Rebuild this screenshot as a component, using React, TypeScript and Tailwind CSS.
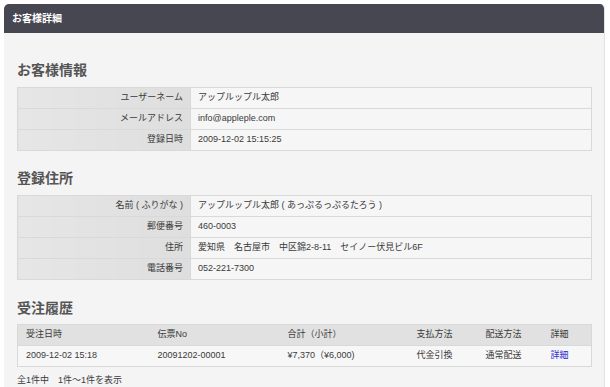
const font = {
  fontFamily: '"Liberation Sans", "Noto Sans CJK JP", sans-serif',
};

const customer = [
  { label: "ユーザーネーム", value: "アップルップル太郎" },
  { label: "メールアドレス", value: "info@appleple.com" },
  { label: "登録日時", value: "2009-12-02 15:15:25" },
];

const address = [
  { label: "名前 ( ふりがな )", value: "アップルップル太郎 ( あっぷるっぷるたろう )" },
  { label: "郵便番号", value: "460-0003" },
  { label: "住所", value: "愛知県　名古屋市　中区錦2-8-11　セイノー伏見ビル6F" },
  { label: "電話番号", value: "052-221-7300" },
];

const InfoTable = ({ rows }: { rows: { label: string; value: string }[] }) => (
  <table className="w-full border-collapse table-fixed text-[9px] text-[#3a3a3a]">
    <tbody>
      {rows.map((r) => (
        <tr key={r.label} className="h-[21px]">
          <th className="w-[173px] border border-[#d9d9d9] bg-gradient-to-r from-[#e6e6e6] to-[#dedede] pr-[7px] text-right font-normal">
            {r.label}
          </th>
          <td className="border border-[#d9d9d9] bg-[#f6f6f6] pl-[7px]">{r.value}</td>
        </tr>
      ))}
    </tbody>
  </table>
);

const Heading = ({ children, first }: { children: string; first?: boolean }) => (
  <h2
    className={`${first ? "mt-[27px]" : "mt-[17px]"} mb-[7px] h-[20px] text-[14px] font-bold leading-[20px] text-[#555]`}
  >
    {children}
  </h2>
);

export default function App() {
  return (
    <div className="min-h-screen bg-white pl-[4px] pr-[5px] pt-[4px]" style={font}>
      <div className="overflow-hidden rounded-t-[5px] border-r border-[#e2e2e2] bg-[#f4f4f4]">
        <div className="flex h-[29px] items-center bg-[#474751] pl-[8px] text-[10px] font-bold text-white">
          お客様詳細
        </div>
        <div className="pl-[13px] pr-[12px] pb-[20px]">
          <Heading first>お客様情報</Heading>
          <InfoTable rows={customer} />

          <Heading>登録住所</Heading>
          <InfoTable rows={address} />

          <h2 className="mt-[18px] mb-[6px] h-[20px] text-[14px] font-bold leading-[20px] text-[#555]">
            受注履歴
          </h2>
          <table className="w-full border-collapse table-fixed text-[9px] text-[#3a3a3a]">
            <thead>
              <tr className="h-[21px] bg-[#e1e1e1] text-left">
                <th className="w-[132px] border-y border-l border-[#d9d9d9] pl-[8px] font-normal">受注日時</th>
                <th className="w-[130px] border-y border-[#d9d9d9] pl-[8px] font-normal">伝票No</th>
                <th className="w-[129px] border-y border-[#d9d9d9] pl-[8px] font-normal">合計（小計）</th>
                <th className="w-[69px] border-y border-[#d9d9d9] pl-[8px] font-normal">支払方法</th>
                <th className="w-[65px] border-y border-[#d9d9d9] pl-[8px] font-normal">配送方法</th>
                <th className="border-y border-r border-[#d9d9d9] pl-[8px] font-normal">詳細</th>
              </tr>
            </thead>
            <tbody>
              <tr className="h-[21px] bg-[#f7f7f7]">
                <td className="border-y border-l border-[#d9d9d9] pl-[8px]">2009-12-02 15:18</td>
                <td className="border-y border-[#d9d9d9] pl-[8px]">20091202-00001</td>
                <td className="border-y border-[#d9d9d9] pl-[8px]">¥7,370（¥6,000)</td>
                <td className="border-y border-[#d9d9d9] pl-[8px]">代金引換</td>
                <td className="border-y border-[#d9d9d9] pl-[8px]">通常配送</td>
                <td className="border-y border-r border-[#d9d9d9] pl-[8px]">
                  <a href="#" className="text-[#2b2bd6]">詳細</a>
                </td>
              </tr>
            </tbody>
          </table>
          <div className="mt-[6px] h-[15px] text-[9px] leading-[15px] text-[#3a3a3a]">全1件中　1件〜1件を表示</div>
          <div className="h-[20px] border-t border-[#d9d9d9] bg-[#f6f6f6]" />
        </div>
      </div>
    </div>
  );
}
